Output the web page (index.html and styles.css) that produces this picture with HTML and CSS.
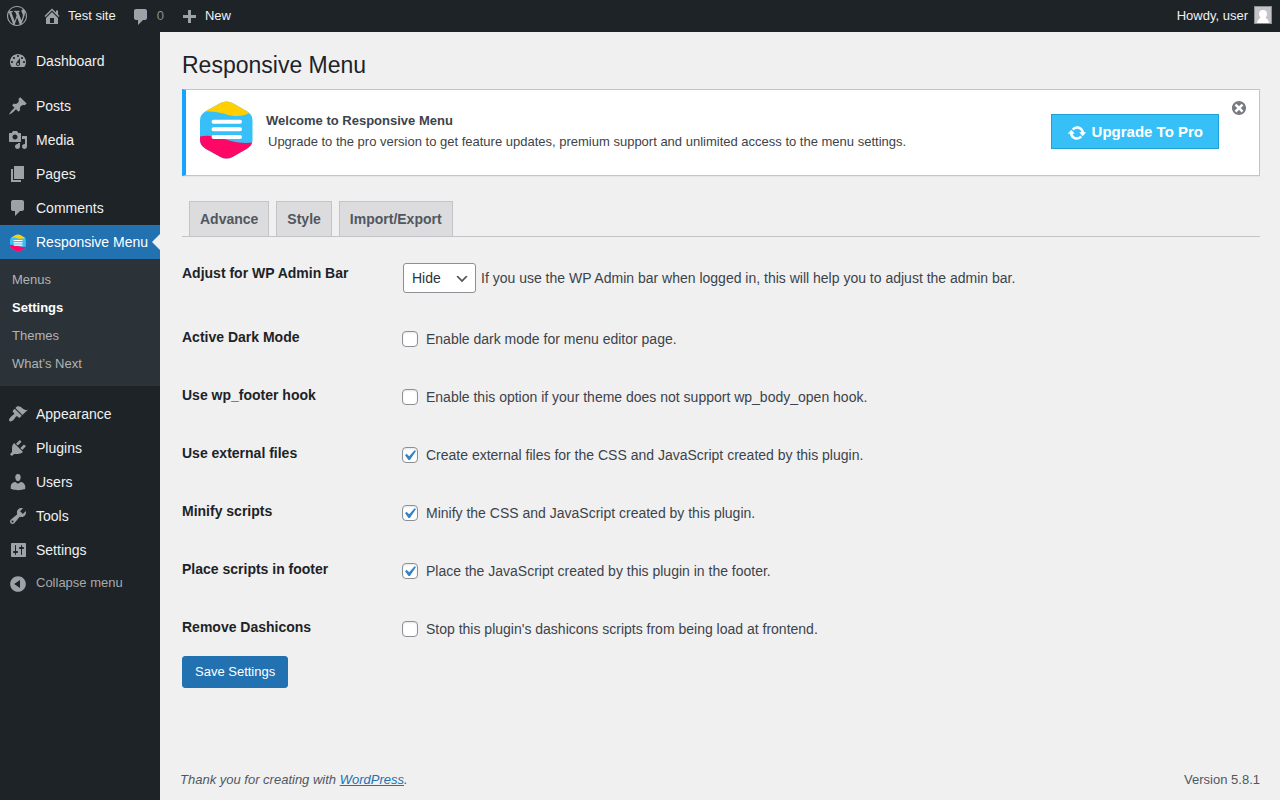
FILE: index.html
```html
<!DOCTYPE html>
<html lang="en">

<head>
    <meta charset="UTF-8">
    <meta name="viewport" content="width=device-width, initial-scale=1.0">
    <title>Responsive Menu</title>
    <link rel="stylesheet" href="styles.css">
</head>

<body>

    <!-- Shared plugin logo -->
    <svg class="sprite" aria-hidden="true">
        <defs>
            <clipPath id="hexagon">
                <path d="M20.500 2Q26.500 -1.200 32.500 2L46.500 10C50.500 12.500 52.500 15 52.500 20V38C52.500 43 50.500 45.500 46.500 48L32.500 56Q26.500 59.200 20.500 56L6 48C2 45.500 0 43 0 38V20C0 15 2 12.500 6 10Z" />
            </clipPath>
            <symbol id="rm-logo" viewBox="0 0 53 58">
                <g clip-path="url(#hexagon)">
                    <path fill="#37bff8" d="M0 0h53v58H0z" />
                    <path fill="#ffcf01" d="M0 0h53v10q-7 5-16 5C27 15 20 9.500 6 10.500L0 11z" />
                    <path fill="#ff0764" d="M0 35.500q9-2 19 1c12 3.500 20 6.500 34 5v17H0z" />
                    <path stroke="#fff" stroke-width="4" stroke-linecap="round" d="M13.500 20.700H40M13.500 28.300H40M13.500 36H40" />
                </g>
            </symbol>
        </defs>
    </svg>

    <header class="admin-bar">
        <a href="#" class="bar-item bar-logo" aria-label="About WordPress">
            <svg class="icon" viewBox="0 0 20 20"><path d="M20 10c0-5.510-4.490-10-10-10C4.480 0 0 4.490 0 10c0 5.520 4.480 10 10 10 5.510 0 10-4.480 10-10zM7.780 15.370L4.370 6.220c.55-.02 1.170-.08 1.170-.08.5-.06.44-1.130-.06-1.110 0 0-1.450.11-2.370.11-.18 0-.37 0-.58-.01C4.120 2.690 6.870 1.110 10 1.110c2.330 0 4.450.87 6.050 2.340-.68-.11-1.650.39-1.650 1.580 0 .74.45 1.360.9 2.100.35.61.55 1.360.55 2.460 0 1.490-1.400 5-1.400 5l-3.030-8.370c.54-.02.82-.17.82-.17.5-.05.44-1.250-.06-1.220 0 0-1.440.12-2.380.12-.87 0-2.330-.12-2.330-.12-.5-.03-.56 1.200-.06 1.220l.92.08 1.260 3.410zM17.410 10c.24-.64.74-1.870.43-4.250.7 1.290 1.050 2.710 1.050 4.250 0 3.290-1.730 6.240-4.400 7.780.97-2.590 1.940-5.200 2.920-7.780zM6.100 18.090C3.120 16.650 1.110 13.530 1.110 10c0-1.300.23-2.480.72-3.590C3.250 10.300 4.670 14.200 6.100 18.090zm4.030-6.630l2.580 6.980c-.86.29-1.760.45-2.710.45-.79 0-1.570-.11-2.290-.33.81-2.380 1.620-4.740 2.420-7.100z" /></svg>
        </a>
        <a href="#" class="bar-item">
            <svg class="icon" viewBox="0 0 20 20"><path d="M16 8.500l1.530 1.530-1.060 1.060L10 4.600l-6.470 6.490-1.060-1.060L10 2.500l4 4v-2h2v4zm-6-2.460l6 5.990V18H4v-5.970zM12 17v-5H8v5h4z" /></svg>
            <span>Test site</span>
        </a>
        <a href="#" class="bar-item bar-comments">
            <svg class="icon" viewBox="0 -1 20 20"><path d="M5 2h9c1.100 0 2 .9 2 2v7c0 1.100-.9 2-2 2h-2l-5 5v-5H5c-1.100 0-2-.9-2-2V4c0-1.100.9-2 2-2z" /></svg>
            <span>0</span>
        </a>
        <a href="#" class="bar-item">
            <svg class="icon" viewBox="0 -2 20 20"><path d="M17 7v3h-5v5H9v-5H4V7h5V2h3v5h5z" /></svg>
            <span>New</span>
        </a>
        <a href="#" class="bar-item bar-account">
            <span>Howdy, user</span>
            <svg class="avatar" viewBox="0 0 16 16"><path fill="#fff" d="M8 3a4 4 0 0 1 4 4q0 2-1.500 3.500Q13 12 14 16H2q1-4 3.500-5.500Q4 9 4 7a4 4 0 0 1 4-4z" /></svg>
        </a>
    </header>

    <div class="layout">
        <nav class="sidebar" aria-label="Main menu">
            <ul class="menu">
                <li>
                    <a href="#" class="menu-link">
                        <svg class="icon" viewBox="0 0 20 20"><path fill-rule="evenodd" d="M3.760 16h12.480c1.100-1.370 1.760-3.110 1.760-5 0-4.420-3.580-8-8-8s-8 3.580-8 8c0 1.890.66 3.630 1.760 5zM10 4c.55 0 1 .45 1 1s-.45 1-1 1-1-.45-1-1 .45-1 1-1zM6 6c.55 0 1 .45 1 1s-.45 1-1 1-1-.45-1-1 .45-1 1-1zm8 0c.55 0 1 .45 1 1s-.45 1-1 1-1-.45-1-1 .45-1 1-1zm-5.370 5.550L12 7v6c0 1.100-.9 2-2 2s-2-.9-2-2c0-.57.24-1.080.63-1.450zM4 10c.55 0 1 .45 1 1s-.45 1-1 1-1-.45-1-1 .45-1 1-1zm12 0c.55 0 1 .45 1 1s-.45 1-1 1-1-.45-1-1 .45-1 1-1zm-5 3c0-.55-.45-1-1-1s-1 .45-1 1 .45 1 1 1 1-.45 1-1z" /></svg>
                        Dashboard
                    </a>
                </li>
                <li class="separator"></li>
                <li>
                    <a href="#" class="menu-link">
                        <svg class="icon" viewBox="0 0 20 20"><path d="M10.440 3.020l1.820-1.820 6.360 6.350-1.830 1.820c-1.050-.68-2.480-.57-3.410.36l-.75.75c-.92.93-1.040 2.350-.35 3.410l-1.830 1.820-2.410-2.410-2.800 2.790c-.42.42-3.380 2.710-3.800 2.290s1.860-3.390 2.280-3.810l2.790-2.790L4.100 9.360l1.830-1.820c1.050.69 2.480.57 3.400-.36l.75-.75c.93-.92 1.050-2.350.36-3.410z" /></svg>
                        Posts
                    </a>
                </li>
                <li>
                    <a href="#" class="menu-link">
                        <svg class="icon" viewBox="0 0 20 20"><path fill-rule="evenodd" d="M13 11V4c0-.55-.45-1-1-1h-1.670L9 1H5L3.670 3H2c-.55 0-1 .45-1 1v7c0 .55.45 1 1 1h10c.55 0 1-.45 1-1zM7 4.500c1.380 0 2.500 1.120 2.500 2.500S8.380 9.500 7 9.500 4.500 8.380 4.500 7 5.620 4.500 7 4.500zM14 6h5v10.500c0 1.380-1.120 2.500-2.500 2.500S14 17.880 14 16.500s1.120-2.500 2.500-2.500c.17 0 .34.02.5.05V9h-3V6zm-4 8.050V13h2v3.500c0 1.380-1.120 2.500-2.500 2.500S7 17.880 7 16.500 8.120 14 9.500 14c.17 0 .34.02.5.05z" /></svg>
                        Media
                    </a>
                </li>
                <li>
                    <a href="#" class="menu-link">
                        <svg class="icon" viewBox="0 0 20 20"><path d="M6 15V2h10v13H6zm-1 1h8v2H3V5h2v11z" /></svg>
                        Pages
                    </a>
                </li>
                <li>
                    <a href="#" class="menu-link">
                        <svg class="icon" viewBox="0 0 20 20"><path d="M5 2h9c1.100 0 2 .9 2 2v7c0 1.100-.9 2-2 2h-2l-5 5v-5H5c-1.100 0-2-.9-2-2V4c0-1.100.9-2 2-2z" /></svg>
                        Comments
                    </a>
                </li>
                <li>
                    <a href="#" class="menu-link current">
                        <svg class="icon" viewBox="0 -1 20 20"><use href="#rm-logo" x="2" y="1" width="16" height="18" /></svg>
                        Responsive Menu
                    </a>
                    <ul class="submenu">
                        <li><a href="#">Menus</a></li>
                        <li><a href="#" class="active">Settings</a></li>
                        <li><a href="#">Themes</a></li>
                        <li><a href="#">What’s Next</a></li>
                    </ul>
                </li>
                <li class="separator"></li>
                <li>
                    <a href="#" class="menu-link">
                        <svg class="icon" viewBox="0 0 20 20"><path d="M14.480 11.060L7.410 3.990l1.500-1.500c.5-.56 2.300-.47 3.510.32 1.210.8 1.430 1.280 2.910 2.100 1.180.64 2.450 1.260 4.450.85zm-.71.71L6.700 4.700 4.930 6.470c-.39.39-.39 1.020 0 1.410l1.060 1.060c.39.39.39 1.030 0 1.420-.6.6-1.430 1.110-2.210 1.690-.35.26-.7.53-1.010.84C1.430 14.230.4 16.080 1.400 17.070c.99 1 2.840-.03 4.180-1.360.31-.31.58-.66.85-1.020.57-.78 1.080-1.610 1.690-2.210.39-.39 1.020-.39 1.410 0l1.060 1.060c.39.39 1.020.39 1.410 0z" /></svg>
                        Appearance
                    </a>
                </li>
                <li>
                    <a href="#" class="menu-link">
                        <svg class="icon" viewBox="0 0 20 20"><path d="M13.110 4.360L9.870 7.600 8 5.730l3.240-3.240c.35-.34 1.050-.2 1.560.32.52.51.66 1.210.31 1.550zm-8 1.770l.91-1.120 9.010 9.010-1.190.84c-.71.71-2.630 1.160-3.820 1.160H6.140L4.900 17.260c-.59.59-1.540.59-2.120 0-.59-.58-.59-1.530 0-2.120l1.240-1.240v-3.880c0-1.130.4-3.190 1.090-3.890zm7.260 3.970l3.240-3.240c.34-.35 1.040-.21 1.550.31.52.51.66 1.210.31 1.550l-3.240 3.250z" /></svg>
                        Plugins
                    </a>
                </li>
                <li>
                    <a href="#" class="menu-link">
                        <svg class="icon" viewBox="0 0 20 20"><path d="M10 9.250c-2.270 0-2.730-3.440-2.730-3.440C7 4.020 7.820 2 9.970 2c2.160 0 2.980 2.020 2.710 3.810 0 0-.41 3.440-2.680 3.440zm0 2.570L12.720 10c2.390 0 4.520 2.330 4.520 4.530v2.490s-3.650 1.130-7.240 1.130c-3.650 0-7.240-1.130-7.240-1.130v-2.490c0-2.250 1.940-4.480 4.470-4.480z" /></svg>
                        Users
                    </a>
                </li>
                <li>
                    <a href="#" class="menu-link">
                        <svg class="icon" viewBox="0 0 20 20"><path fill-rule="evenodd" d="M16.680 9.770c-1.340 1.340-3.300 1.670-4.950.99l-5.410 6.520c-.99.99-2.590.99-3.580 0s-.99-2.590 0-3.570l6.520-5.420c-.68-1.650-.35-3.610.99-4.950 1.280-1.280 3.120-1.620 4.720-1.060l-2.890 2.890 2.820 2.820 2.860-2.870c.53 1.580.18 3.390-1.080 4.650zM3.810 16.210c.4.39 1.040.39 1.430 0 .4-.4.4-1.040 0-1.430-.39-.4-1.030-.4-1.430 0-.39.39-.39 1.030 0 1.430z" /></svg>
                        Tools
                    </a>
                </li>
                <li>
                    <a href="#" class="menu-link">
                        <svg class="icon" viewBox="0 0 20 20"><path fill-rule="evenodd" d="M18 16V4c0-.55-.45-1-1-1H4c-.55 0-1 .45-1 1v12c0 .55.45 1 1 1h13c.55 0 1-.45 1-1zM8 11h1c.55 0 1 .45 1 1s-.45 1-1 1H8v1.500c0 .28-.22.5-.5.5s-.5-.22-.5-.5V13H6c-.55 0-1-.45-1-1s.45-1 1-1h1V5.500c0-.28.22-.5.5-.5s.5.22.5.5V11zm5-2h-1c-.55 0-1-.45-1-1s.45-1 1-1h1V5.500c0-.28.22-.5.5-.5s.5.22.5.5V7h1c.55 0 1 .45 1 1s-.45 1-1 1h-1v5.500c0 .28-.22.5-.5.5s-.5-.22-.5-.5V9z" /></svg>
                        Settings
                    </a>
                </li>
                <li>
                    <button type="button" class="collapse-button">
                        <svg class="icon" viewBox="0 0 20 20"><path fill-rule="evenodd" d="M10 2.160c4.330 0 7.840 3.510 7.840 7.840s-3.510 7.840-7.840 7.840S2.160 14.330 2.160 10 5.710 2.160 10 2.160zm2 11.720V6.120L6.180 9.970z" /></svg>
                        <span>Collapse menu</span>
                    </button>
                </li>
            </ul>
        </nav>

        <div class="content">
            <main class="wrap">
                <h1>Responsive Menu</h1>

                <!-- Upgrade notice -->
                <section class="notice">
                    <svg class="notice-logo" viewBox="0 0 53 58"><use href="#rm-logo" width="53" height="58" /></svg>
                    <div class="notice-text">
                        <h2>Welcome to Responsive Menu</h2>
                        <p>Upgrade to the pro version to get feature updates, premium support and unlimited access to the menu settings.</p>
                    </div>
                    <a href="#" class="upgrade-button">
                        <svg class="icon" viewBox="0 -1 20 20"><path d="M10.200 3.280c3.530 0 6.430 2.610 6.920 6h2.080l-3.500 4-3.500-4h2.320c-.45-1.970-2.210-3.450-4.320-3.450-1.450 0-2.730.71-3.540 1.780L4.950 5.660C6.230 4.200 8.110 3.280 10.200 3.280zm-.4 13.440c-3.520 0-6.430-2.610-6.920-6H.8l3.500-4c1.170 1.330 2.330 2.670 3.500 4H5.480c.45 1.970 2.210 3.450 4.320 3.450 1.450 0 2.730-.71 3.540-1.780l1.710 1.950c-1.280 1.460-3.150 2.380-5.250 2.380z" /></svg>
                        Upgrade To Pro
                    </a>
                    <button type="button" class="dismiss-button" aria-label="Dismiss this notice">
                        <svg viewBox="2 2 16 16"><path fill-rule="evenodd" d="M10 2c4.420 0 8 3.580 8 8s-3.580 8-8 8-8-3.580-8-8 3.580-8 8-8zm5 11l-3-3 3-3-2-2-3 3-3-3-2 2 3 3-3 3 2 2 3-3 3 3z" /></svg>
                    </button>
                </section>

                <nav class="tabs" aria-label="Settings sections">
                    <a href="#">Advance</a>
                    <a href="#">Style</a>
                    <a href="#">Import/Export</a>
                </nav>

                <form>
                    <table class="form-table">
                        <tbody>
                            <tr>
                                <th scope="row"><label for="adminBar">Adjust for WP Admin Bar</label></th>
                                <td>
                                    <div class="field field-select">
                                        <select id="adminBar">
                                            <option>Hide</option>
                                        </select>
                                        <span>If you use the WP Admin bar when logged in, this will help you to adjust the admin bar.</span>
                                    </div>
                                </td>
                            </tr>
                            <tr>
                                <th scope="row">Active Dark Mode</th>
                                <td>
                                    <label class="field">
                                        <input type="checkbox">
                                        <span>Enable dark mode for menu editor page.</span>
                                    </label>
                                </td>
                            </tr>
                            <tr>
                                <th scope="row">Use wp_footer hook</th>
                                <td>
                                    <label class="field">
                                        <input type="checkbox">
                                        <span>Enable this option if your theme does not support wp_body_open hook.</span>
                                    </label>
                                </td>
                            </tr>
                            <tr>
                                <th scope="row">Use external files</th>
                                <td>
                                    <label class="field">
                                        <input type="checkbox" checked>
                                        <span>Create external files for the CSS and JavaScript created by this plugin.</span>
                                    </label>
                                </td>
                            </tr>
                            <tr>
                                <th scope="row">Minify scripts</th>
                                <td>
                                    <label class="field">
                                        <input type="checkbox" checked>
                                        <span>Minify the CSS and JavaScript created by this plugin.</span>
                                    </label>
                                </td>
                            </tr>
                            <tr>
                                <th scope="row">Place scripts in footer</th>
                                <td>
                                    <label class="field">
                                        <input type="checkbox" checked>
                                        <span>Place the JavaScript created by this plugin in the footer.</span>
                                    </label>
                                </td>
                            </tr>
                            <tr>
                                <th scope="row">Remove Dashicons</th>
                                <td>
                                    <label class="field">
                                        <input type="checkbox">
                                        <span>Stop this plugin's dashicons scripts from being load at frontend.</span>
                                    </label>
                                </td>
                            </tr>
                        </tbody>
                    </table>
                    <button type="submit" class="save-button">Save Settings</button>
                </form>
            </main>

            <footer class="footer">
                <p class="thanks">Thank you for creating with <a href="#">WordPress</a>.</p>
                <p>Version 5.8.1</p>
            </footer>
        </div>
    </div>

</body>

</html>
```
FILE: styles.css
```css
* {
    box-sizing: border-box;
    margin: 0;
    padding: 0;
}

body {
    display: flex;
    flex-direction: column;
    min-height: 100vh;
    background-color: #f0f0f1;
    color: #3c434a;
    font-family: 'Liberation Sans', Arial, sans-serif;
    font-size: 13px;
    line-height: 20px;
}

button,
input,
select {
    font-family: inherit;
}

ul {
    list-style: none;
}

.sprite {
    position: absolute;
    width: 0;
    height: 0;
}

.icon {
    flex: none;
    width: 20px;
    height: 20px;
    fill: #9ca2a7;
}

/* Top bar */
.admin-bar {
    display: flex;
    height: 32px;
    background-color: #1d2327;
}

.bar-item {
    display: flex;
    align-items: center;
    gap: 6px;
    padding: 0 8px 0 7px;
    color: #f0f0f1;
    line-height: 32px;
    text-decoration: none;
}

.bar-comments {
    color: #8c8f94;
}

.bar-account {
    margin-left: auto;
}

.avatar {
    width: 18px;
    height: 18px;
    margin-bottom: 2px;
    border: 1px solid #8c8f94;
    background-color: #c3c4c7;
}

.layout {
    display: flex;
    flex: 1;
}

/* Sidebar */
.sidebar {
    flex: none;
    width: 160px;
    padding-top: 12px;
    background-color: #1d2327;
}

.menu-link {
    position: relative;
    display: flex;
    align-items: center;
    gap: 8px;
    height: 34px;
    padding-left: 8px;
    color: #f0f0f1;
    font-size: 14px;
    text-decoration: none;
    white-space: nowrap;
}

.menu-link:hover {
    color: #72aee6;
}

.menu-link.current {
    background-color: #2271b1;
    color: #fff;
}

.menu-link.current::after {
    content: '';
    position: absolute;
    right: 0;
    top: 9px;
    border: 8px solid transparent;
    border-left-width: 0;
    border-right-color: #f0f0f1;
}

.separator {
    height: 11px;
}

.submenu {
    padding: 7px 0 8px;
    background-color: #2c3338;
}

.submenu a {
    display: block;
    padding: 4px 12px;
    color: #b0b3b5;
    text-decoration: none;
}

.submenu a.active {
    color: #fff;
    font-weight: 600;
}

.collapse-button {
    display: flex;
    align-items: center;
    gap: 8px;
    width: 100%;
    height: 34px;
    padding-left: 8px;
    border: none;
    background: none;
    color: #a7aaad;
    font-size: 13px;
    cursor: pointer;
}

.collapse-button span {
    padding-bottom: 4px;
}

/* Page content */
.content {
    display: flex;
    flex: 1;
    flex-direction: column;
    justify-content: space-between;
    min-width: 0;
    padding: 0 20px;
}

.wrap {
    margin: 10px 0 0 2px;
}

h1 {
    padding: 8px 0;
    color: #1d2327;
    font-size: 23px;
    font-weight: 400;
    line-height: 31px;
}

.notice {
    display: flex;
    align-items: center;
    padding: 11px 13px 13px 14px;
    border: 1px solid #c3c4c7;
    border-left: 4px solid #18a4fd;
    background-color: #fff;
    box-shadow: 0 1px 1px rgba(0, 0, 0, 0.04);
}

.notice-logo {
    flex: none;
    width: 53px;
    height: 58px;
    margin: 0 13px 3px 0;
}

.notice-text {
    flex: 1;
}

.notice-text h2 {
    font-size: 13px;
    font-weight: 600;
    line-height: 20px;
}

.notice-text p {
    padding: 2px;
    line-height: 18px;
}

.upgrade-button {
    display: flex;
    align-items: center;
    gap: 5px;
    height: 35px;
    padding: 0 15px;
    border: 1px solid #1e9fd8;
    background-color: #37bff8;
    color: #fff;
    font-size: 15px;
    font-weight: 600;
    text-decoration: none;
    white-space: nowrap;
}

.upgrade-button .icon {
    fill: #fff;
}

.dismiss-button {
    align-self: flex-start;
    display: flex;
    margin-left: 13px;
    border: none;
    background: none;
    cursor: pointer;
}

.dismiss-button svg {
    width: 14px;
    height: 14px;
    fill: #787c82;
}

.tabs {
    display: flex;
    gap: 7px;
    margin-top: 25px;
    padding-left: 7px;
    border-bottom: 1px solid #c3c4c7;
}

.tabs a {
    padding: 5px 10px;
    border: 1px solid #c3c4c7;
    border-bottom: none;
    background-color: #dcdcde;
    color: #50575e;
    font-size: 14px;
    font-weight: 600;
    line-height: 24px;
    text-decoration: none;
}

.tabs a:hover {
    background-color: #fff;
    color: #3c434a;
}

/* Settings form */
.form-table {
    width: 100%;
    margin-top: 7px;
    border-collapse: collapse;
    font-size: 14px;
}

.form-table th {
    width: 210px;
    padding: 20px 10px 20px 0;
    color: #1d2327;
    font-weight: 600;
    line-height: 18px;
    text-align: left;
    vertical-align: top;
}

.form-table td {
    padding: 19px 10px 15px;
}

.field {
    display: flex;
    align-items: center;
    gap: 8px;
    line-height: 24px;
}

.field-select {
    gap: 5px;
    padding-left: 1px;
}

.field select {
    height: 30px;
    padding: 0 34px 0 8px;
    border: 1px solid #8c8f94;
    border-radius: 3px;
    background: #fff url('data:image/svg+xml;charset=UTF-8,<svg width="20" height="20" xmlns="http://www.w3.org/2000/svg"><path d="M5 6l5 5 5-5 2 1-7 7-7-7 2-1z" fill="%23555"/></svg>') no-repeat right 5px top 55%;
    background-size: 16px 16px;
    color: #2c3338;
    font-size: 14px;
    appearance: none;
    cursor: pointer;
}

.field input {
    flex: none;
    width: 16px;
    height: 16px;
    border: 1px solid #8c8f94;
    border-radius: 4px;
    background: #fff no-repeat -4px -3px;
    box-shadow: inset 0 1px 2px rgba(0, 0, 0, 0.1);
    appearance: none;
}

.field input:checked {
    background-image: url('data:image/svg+xml;charset=UTF-8,<svg xmlns="http://www.w3.org/2000/svg" viewBox="0 0 20 20"><path d="M14.830 4.890l1.340.94-5.810 8.380H9.020L5.780 9.670l1.340-1.250 2.570 2.400z" fill="%233582c4"/></svg>');
    background-size: 21px 21px;
}

.save-button {
    height: 32px;
    padding: 0 12px 2px;
    border: 1px solid #2271b1;
    border-radius: 3px;
    background-color: #2271b1;
    color: #fff;
    font-size: 13px;
    cursor: pointer;
}

.save-button:hover {
    background-color: #135e96;
}

.footer {
    display: flex;
    justify-content: space-between;
    padding: 10px 0;
    color: #50575e;
}

.thanks {
    font-style: italic;
}

.thanks a {
    color: #2271b1;
}
```
